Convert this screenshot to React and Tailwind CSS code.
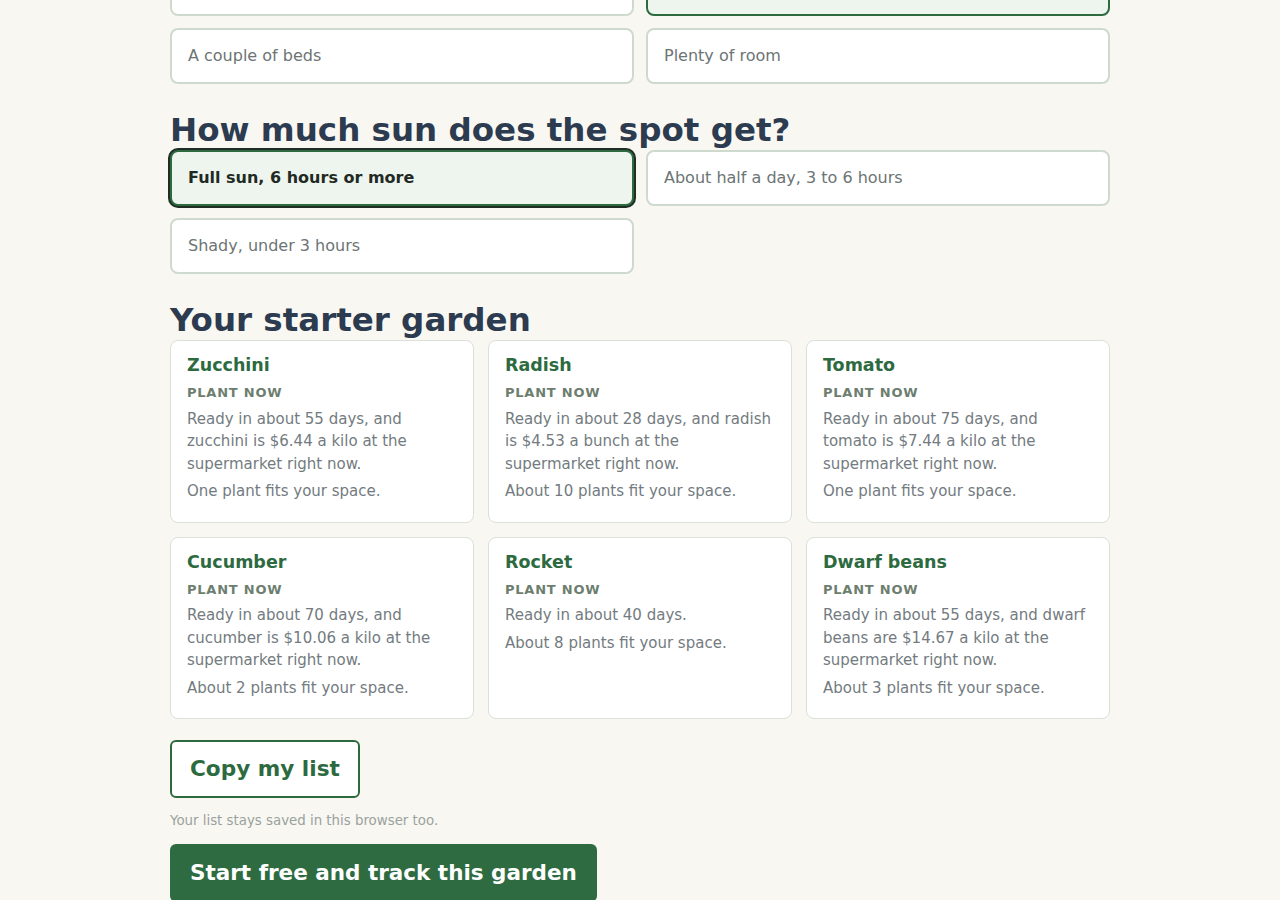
import React from "react";

const plants = [
  {
    name: "Zucchini",
    body: "Ready in about 55 days, and zucchini is $6.44 a kilo at the supermarket right now.",
    fit: "One plant fits your space.",
  },
  {
    name: "Radish",
    body: "Ready in about 28 days, and radish is $4.53 a bunch at the supermarket right now.",
    fit: "About 10 plants fit your space.",
  },
  {
    name: "Tomato",
    body: "Ready in about 75 days, and tomato is $7.44 a kilo at the supermarket right now.",
    fit: "One plant fits your space.",
  },
  {
    name: "Cucumber",
    body: "Ready in about 70 days, and cucumber is $10.06 a kilo at the supermarket right now.",
    fit: "About 2 plants fit your space.",
  },
  {
    name: "Rocket",
    body: "Ready in about 40 days.",
    fit: "About 8 plants fit your space.",
  },
  {
    name: "Dwarf beans",
    body: "Ready in about 55 days, and dwarf beans are $14.67 a kilo at the supermarket right now.",
    fit: "About 3 plants fit your space.",
  },
];

function Option({ label, selected, focused }) {
  const base =
    "h-[56px] rounded-lg border-2 px-4 flex items-center text-left text-[16px] leading-6";
  if (selected) {
    return (
      <button
        className={
          base +
          " border-[#2d6a3f] bg-[#eef5ee] font-bold text-[#1f2a24] " +
          (focused ? "ring-2 ring-[#1f2d24]" : "")
        }
      >
        {label}
      </button>
    );
  }
  return (
    <button className={base + " border-[#cfdacf] bg-white text-[#6c7474]"}>
      {label}
    </button>
  );
}

function PlantCard({ p }) {
  return (
    <div className="rounded-lg border border-[#d9e1d9] bg-white px-4 pt-[14px] pb-[19px]">
      <div className="text-[17.5px] font-bold leading-[1.2] text-[#2d6a3f]">{p.name}</div>
      <div className="mt-[7px] text-[13px] font-bold uppercase leading-[1.5] tracking-[0.06em] text-[#6d7e6f]">
        Plant now
      </div>
      <p className="mt-[5px] text-[15px] leading-[1.5] text-[#737b80]">{p.body}</p>
      <p className="mt-[5px] text-[15px] leading-[1.5] text-[#737b80]">{p.fit}</p>
    </div>
  );
}

export default function App() {
  return (
    <div
      className="min-h-screen overflow-hidden bg-[#f8f7f2]"
      style={{ fontFamily: '"DejaVu Sans", "Noto Sans", sans-serif' }}
    >
      <div className="mx-auto w-[940px] -mt-[40px]">
        <div className="grid grid-cols-2 gap-3">
          <Option label="A small patch" />
          <Option label="A few pots" selected />
          <Option label="A couple of beds" />
          <Option label="Plenty of room" />
        </div>

        <h2 className="mt-[26px] text-[32.5px] font-bold leading-10 text-[#2c3b4f]">
          How much sun does the spot get?
        </h2>
        <div className="grid grid-cols-2 gap-3">
          <Option label="Full sun, 6 hours or more" selected focused />
          <Option label="About half a day, 3 to 6 hours" />
          <Option label="Shady, under 3 hours" />
        </div>

        <h2 className="mt-[26px] text-[32.5px] font-bold leading-10 text-[#2c3b4f]">
          Your starter garden
        </h2>
        <div className="grid grid-cols-3 gap-[14px]">
          {plants.map((p) => (
            <PlantCard key={p.name} p={p} />
          ))}
        </div>

        <button className="mt-[21px] rounded-md border-2 border-[#2d6a3f] bg-white px-[18px] py-3 text-[21.6px] font-bold leading-[30px] text-[#2d6a3f]">
          Copy my list
        </button>
        <p className="mt-[13px] text-[13.35px] leading-[1.5] text-[#9aa29e]">
          Your list stays saved in this browser too.
        </p>
        <button className="mt-[13px] rounded-md bg-[#2e6b40] px-5 py-3 text-[21.5px] font-bold leading-[34px] text-white">
          Start free and track this garden
        </button>
      </div>
    </div>
  );
}
